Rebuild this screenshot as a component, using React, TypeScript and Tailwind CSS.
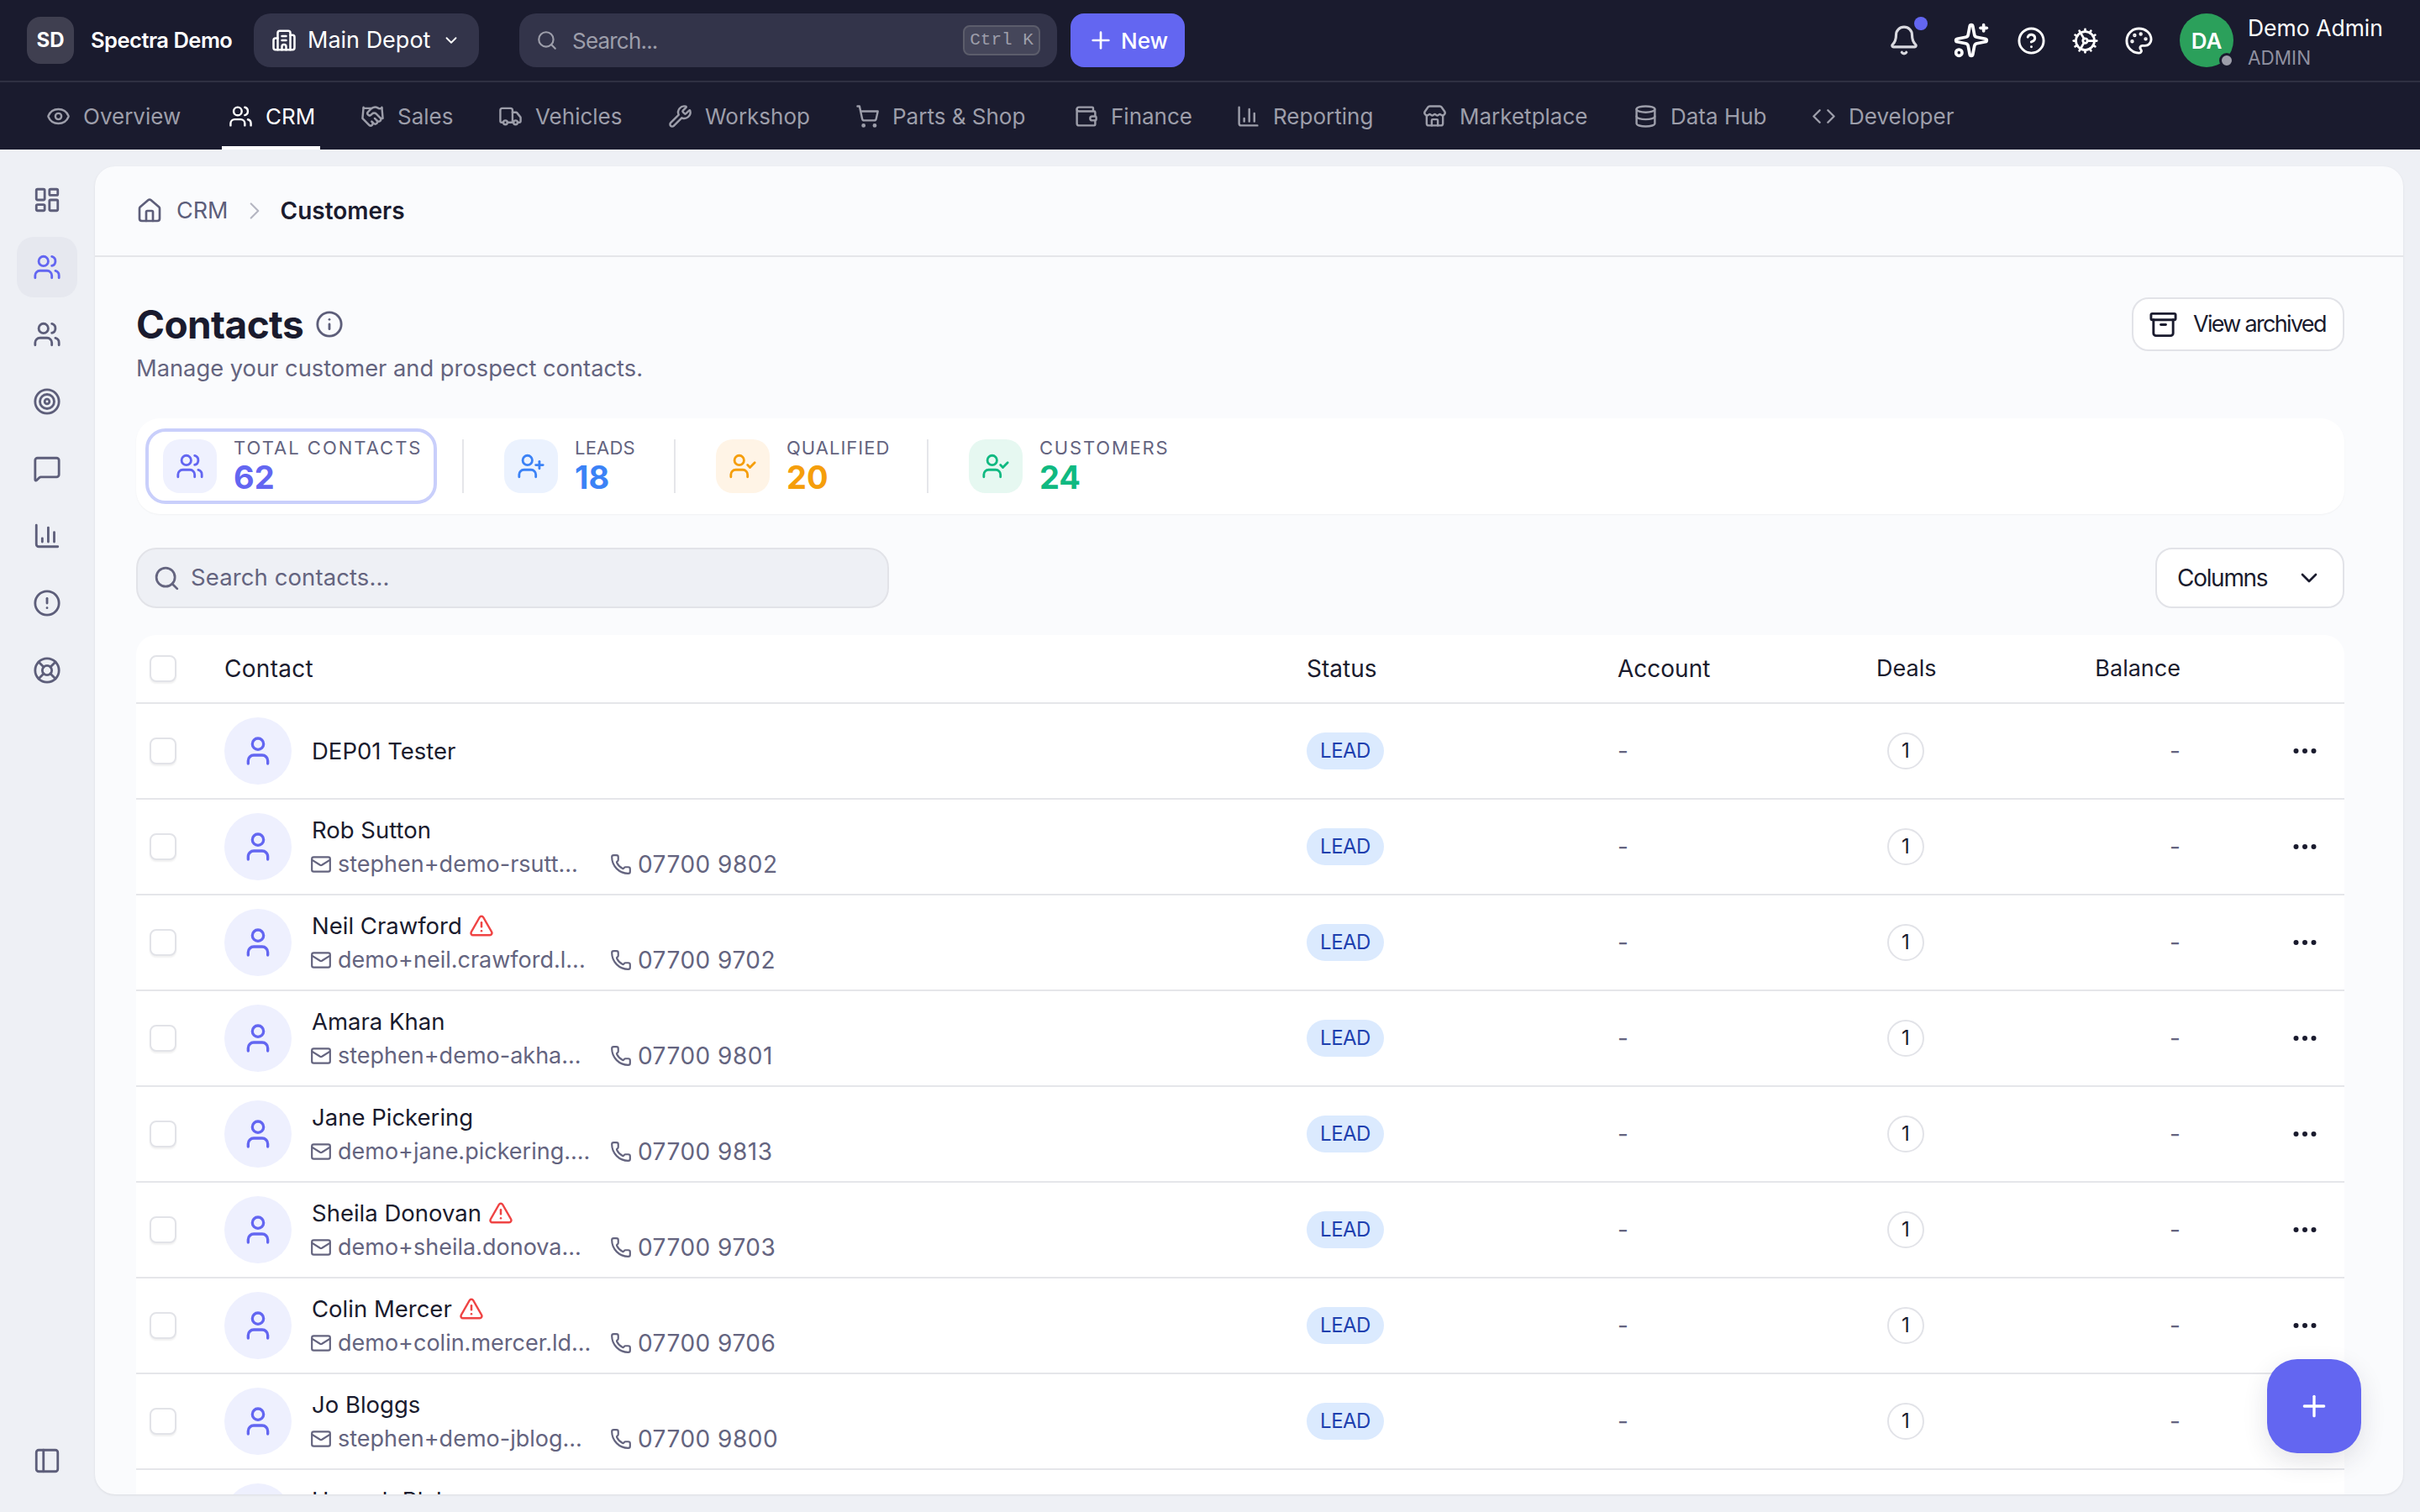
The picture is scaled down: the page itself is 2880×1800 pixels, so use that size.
import {
  Archive, Bell, Building2, ChartColumn, ChevronDown, ChevronRight, CircleAlert, CircleHelp, Code, Cog, Database, Ellipsis,
  Eye, Handshake, House, Info, LayoutDashboard, LifeBuoy, Mail, MessageSquare, Palette, PanelLeft, Phone, Plus,
  Search, ShoppingCart, Sparkles, Store, Target, TriangleAlert, Truck, User, UserCheck, UserPlus, Users,
  Wallet, Wrench,
} from 'lucide-react'

const NAV = [
  { label: 'Overview', icon: Eye, width: 'w-[117px]' },
  { label: 'CRM', icon: Users, active: true, width: 'w-[57px]' },
  { label: 'Sales', icon: Handshake, width: 'w-[64px]' },
  { label: 'Vehicles', icon: Truck, width: 'w-[102px]' },
  { label: 'Workshop', icon: Wrench, width: 'w-[123px]' },
  { label: 'Parts & Shop', icon: ShoppingCart, width: 'w-[160px]' },
  { label: 'Finance', icon: Wallet, width: 'w-[93px]' },
  { label: 'Reporting', icon: ChartColumn, width: 'w-[122px]' },
  { label: 'Marketplace', icon: Store, width: 'w-[151px]' },
  { label: 'Data Hub', icon: Database, width: 'w-[112px]' },
  { label: 'Developer', icon: Code, width: 'w-[115px]' },
]

const SIDE = [LayoutDashboard, Users, Users, Target, MessageSquare, ChartColumn, CircleAlert, LifeBuoy]

const STATS = [
  { label: 'TOTAL CONTACTS', value: '62', icon: Users, box: 'bg-[#eff1fe]', tone: 'text-[#6366f1]', width: 'w-[222px]', track: 'tracking-[2px]' },
  { label: 'LEADS', value: '18', icon: UserPlus, box: 'bg-[#ebf2fe]', tone: 'text-[#3b82f6]', width: 'w-[70px]', track: 'tracking-[0.2px]' },
  { label: 'QUALIFIED', value: '20', icon: UserCheck, box: 'bg-[#fff4e6]', tone: 'text-[#f59e0b]', width: 'w-[119px]', track: 'tracking-[1px]' },
  { label: 'CUSTOMERS', value: '24', icon: UserCheck, box: 'bg-[#e6f8f1]', tone: 'text-[#10b981]', width: 'w-[150px]', track: 'tracking-[1.8px]' },
]

const ROWS = [
  { name: 'DEP01 Tester' },
  { name: 'Rob Sutton', email: 'stephen+demo-rsutt...', phone: '07700 9802' },
  { name: 'Neil Crawford', email: 'demo+neil.crawford.l...', phone: '07700 9702', warn: true },
  { name: 'Amara Khan', email: 'stephen+demo-akha...', phone: '07700 9801' },
  { name: 'Jane Pickering', email: 'demo+jane.pickering....', phone: '07700 9813' },
  { name: 'Sheila Donovan', email: 'demo+sheila.donova...', phone: '07700 9703', warn: true },
  { name: 'Colin Mercer', email: 'demo+colin.mercer.ld...', phone: '07700 9706', warn: true },
  { name: 'Jo Bloggs', email: 'stephen+demo-jblog...', phone: '07700 9800' },
  { name: 'Hannah Blake', email: 'stephen+demo-hblak...', phone: '07700 9804' },
]

const GRID = 'grid grid-cols-[105px_1288px_370px_308px_70px_292px_1fr] items-center'

function Checkbox() {
  return <div className="ml-4 h-8 w-8 rounded-[8px] border-2 border-[#e2e3e8] bg-white shadow-[0_2px_2px_rgba(0,0,0,0.06)]" />
}

function Row({ name, email, phone, warn }: { name: string; email?: string; phone?: string; warn?: boolean }) {
  return (
    <div className={`${GRID} h-[114px] shrink-0 border-b-2 border-[#e5e6ea]`}>
      <Checkbox />
      <div className="flex items-center gap-6">
        <div className="flex h-20 w-20 items-center justify-center rounded-full bg-[#eef0fe] text-[#6366f1]">
          <User size={40} strokeWidth={2} />
        </div>
        <div className="flex flex-col gap-[6px]">
          <div className="flex items-center gap-2 text-[27.5px] leading-[36px] text-[#1a1b2e]">
            {name}
            {warn && <TriangleAlert size={30} className="text-[#ef4444]" />}
          </div>
          {email && (
            <div className="-ml-[2px] flex items-center text-[#64647f]">
              <Mail size={26} className="mr-[7px] shrink-0" />
              <span className="w-[324px] whitespace-nowrap text-[27px] leading-[34px]">{email}</span>
              <Phone size={26} className="mr-[7px] shrink-0" />
              <span className="text-[28px] leading-[34px] tracking-[0.5px]">{phone}</span>
            </div>
          )}
        </div>
      </div>
      <div>
        <span className="inline-flex h-11 w-[92px] items-center justify-center rounded-full bg-[#dbeafe] text-[24px] tracking-[-0.5px] text-[#1e40af]">LEAD</span>
      </div>
      <div className="text-[28px] text-[#64647f]">-</div>
      <div className="flex justify-center">
        <span className="flex h-11 w-11 items-center justify-center rounded-full border-2 border-[#e2e3e8] text-[24px] text-[#1a1b2e]">1</span>
      </div>
      <div className="text-right text-[28px] text-[#64647f]">-</div>
      <div className="flex justify-end pr-[29px] text-[#1a1b2e]">
        <Ellipsis size={36} strokeWidth={2} />
      </div>
    </div>
  )
}

export default function App() {
  return (
    <div className="flex h-[1800px] w-[2880px] flex-col overflow-hidden bg-[#eef0f5] font-['Inter',sans-serif]">
      {/* Top bar */}
      <header className="flex h-[98px] shrink-0 items-center border-b-2 border-[#2f3042] bg-[#1a1b2e] pl-8 pr-[44px]">
        <div className="flex h-14 w-14 shrink-0 items-center justify-center rounded-[16px] bg-[#3f3f50] text-[24px] font-bold text-white">SD</div>
        <span className="ml-5 w-[194px] whitespace-nowrap text-[25.5px] font-semibold tracking-[-0.5px] text-white">Spectra Demo</span>
        <button className="flex h-16 w-[268px] items-center rounded-[20px] bg-[#33344a] pl-[21px] text-[27px] text-white">
          <Building2 size={30} />
          <span className="ml-[13px]">Main Depot</span>
          <ChevronDown size={22} className="ml-[14px]" />
        </button>
        <div className="ml-12 flex h-16 w-[640px] items-center rounded-[20px] bg-[#33344a] pl-5 pr-5 text-[#9d9eaa]">
          <Search size={26} />
          <span className="ml-[17px] flex-1 text-[26px] tracking-[-0.8px]">Search...</span>
          <span className="flex h-9 w-[92px] items-center justify-center rounded-[8px] border-2 border-[#5c5d6b] bg-[#45465a] font-['Liberation_Mono',monospace] text-[21px]">Ctrl K</span>
        </div>
        <button className="ml-4 flex h-16 w-[136px] items-center justify-center gap-2 rounded-[16px] bg-[#6366f1] text-[26px] font-medium text-white">
          <Plus size={32} />
          New
        </button>
        <div className="ml-auto flex items-center text-white">
          <div className="relative mr-[39px] text-[#d9d9df]">
            <Bell size={38} />
            <span className="absolute -right-[9px] -top-[9px] h-4 w-4 rounded-full bg-[#6366f1]" />
          </div>
          <Sparkles size={44} className="mr-[32px]" />
          <CircleHelp size={35} className="mr-[30px]" />
          <Cog size={33} className="mr-[30px]" />
          <Palette size={35} className="mr-[31px]" />
          <div className="relative mr-[17px] flex h-16 w-16 items-center justify-center rounded-full bg-[#2ba05b] text-[26px] font-semibold text-white">
            DA
            <span className="absolute -bottom-[1px] -right-[1px] h-[18px] w-[18px] rounded-full border-[3px] border-[#1a1b2e] bg-[#9d9eaa]" />
          </div>
          <div className="flex w-[161px] flex-col whitespace-nowrap pt-[5px]">
            <span className="text-[26.5px] leading-[36px] text-white">Demo Admin</span>
            <span className="text-[22.5px] leading-[36px] text-[#8f90a0]">ADMIN</span>
          </div>
        </div>
      </header>

      {/* Module nav */}
      <nav className="flex h-20 shrink-0 items-stretch gap-[40px] bg-[#1a1b2e] pl-[47px]">
        {NAV.map(({ label, icon: Icon, active, width }) => (
          <div key={label} className={`relative flex items-center gap-[15px] whitespace-nowrap px-2 text-[26px] ${active ? 'text-white' : 'text-[#9d9eaa]'}`}>
            <Icon size={29} />
            <span className={width}>{label}</span>
            {active && <span className="absolute inset-x-0 bottom-0 h-1 bg-white" />}
          </div>
        ))}
      </nav>

      <div className="flex min-h-0 flex-1 pb-[21px] pr-5 pt-5">
        {/* Sidebar */}
        <aside className="flex w-[113px] shrink-0 flex-col items-center pr-[1px] pt-[4px] text-[#5d5e7a]">
          {SIDE.map((Icon, i) => (
            <div key={i} className={`mb-2 flex h-[72px] w-[72px] items-center justify-center rounded-[20px] ${i === 1 ? 'bg-[#e6e8ef] text-[#6366f1]' : ''}`}>
              <Icon size={34} />
            </div>
          ))}
          <div className="mb-[20px] mt-auto flex h-[40px] items-center"><PanelLeft size={34} /></div>
        </aside>

        {/* Main card */}
        <main className="relative flex min-w-0 flex-1 flex-col overflow-hidden rounded-[24px] bg-[#fafbfd] shadow-[0_1px_3px_rgba(0,0,0,0.08)]">
          <div className="flex h-[108px] shrink-0 items-center border-b-2 border-[#e5e6ea] pl-[49px]">
            <House size={32} className="text-[#5d5e7a]" />
            <span className="ml-[16px] text-[27px] text-[#5d5e7a]">CRM</span>
            <ChevronRight size={34} className="ml-[14px] text-[#b5b6c2]" strokeWidth={1.5} />
            <span className="ml-[14px] text-[28px] font-semibold text-[#1a1b2e]">Customers</span>
          </div>

          <div className="flex min-h-0 flex-1 flex-col pl-[49px] pr-[70px]">
            <div className="mt-[48px] flex shrink-0 items-start justify-between">
              <div>
                <div className="flex items-center gap-[14px]">
                  <h1 className="text-[46px] font-bold leading-[64px] tracking-[-0.6px] text-[#1a1b2e]">Contacts</h1>
                  <Info size={34} className="text-[#5d5e7a]" />
                </div>
                <p className="mt-[2px] text-[27.3px] leading-[38px] text-[#64647f]">Manage your customer and prospect contacts.</p>
              </div>
              <button className="flex h-16 w-[253px] items-center gap-[18px] rounded-[20px] border-2 border-[#e2e3e8] bg-white pl-[18px] text-[27px] tracking-[-1.7px] text-[#1a1b2e]">
                <Archive size={35} className="shrink-0" />
                <span className="whitespace-nowrap">View archived</span>
              </button>
            </div>

            <div className="mt-[40px] flex h-[114px] shrink-0 items-center rounded-[28px] bg-white pl-[11px] shadow-[0_1px_2px_rgba(0,0,0,0.04)]">
              {STATS.map(({ label, value, icon: Icon, box, tone, width, track }, i) => (
                <div key={label} className="flex items-center">
                  <div className={`flex h-[90px] items-center gap-5 ${i === 0 ? 'rounded-[24px] border-4 border-[#c9cffb] pl-[17px] pr-4' : ''}`}>
                    <div className={`flex h-16 w-16 shrink-0 items-center justify-center rounded-[20px] ${box} ${tone}`}>
                      <Icon size={34} />
                    </div>
                    <div className={`flex flex-col whitespace-nowrap pb-[2px] ${width}`}>
                      <span className={`text-[22px] leading-[28px] text-[#64647f] ${track}`}>{label}</span>
                      <span className={`text-[38px] font-bold leading-[42px] ${tone}`}>{value}</span>
                    </div>
                  </div>
                  {i < 3 && <div className={`mr-[48px] h-16 w-[2px] bg-[#e5e6ea] ${i === 0 ? 'ml-[30px]' : 'ml-[48px]'}`} />}
                </div>
              ))}
            </div>

            <div className="mt-[40px] flex shrink-0 items-center justify-between">
              <div className="flex h-[72px] w-[896px] items-center gap-3 rounded-[24px] border-2 border-[#e2e3e8] bg-[#eef0f5] pl-[18px] text-[27.5px] tracking-[0.1px] text-[#64647f]">
                <Search size={33} />
                Search contacts...
              </div>
              <button className="flex h-[72px] w-[225px] items-center justify-between rounded-[20px] border-2 border-[#e2e3e8] bg-white pl-6 pr-6 text-[28px] tracking-[-1.3px] text-[#1a1b2e]">
                Columns
                <ChevronDown size={32} />
              </button>
            </div>

            <div className="mt-[32px] flex min-h-0 flex-1 flex-col overflow-hidden rounded-t-[24px] bg-white">
              <div className={`${GRID} h-[82px] shrink-0 border-b-2 border-[#e5e6ea] text-[28px] text-[#1a1b2e]`}>
                <Checkbox />
                <span className="tracking-[0.3px]">Contact</span>
                <span>Status</span>
                <span>Account</span>
                <span className="whitespace-nowrap text-center text-[27px]">Deals</span>
                <span className="text-right text-[27px]">Balance</span>
                <span />
              </div>
              {ROWS.map(r => <Row key={r.name} {...r} />)}
            </div>
          </div>

          {/* Floating add button */}
          <button className="absolute bottom-[49px] right-[50px] flex h-[112px] w-[112px] items-center justify-center rounded-[36px] bg-[#6366f1] text-white shadow-[0_10px_30px_rgba(30,30,60,0.12)]">
            <Plus size={40} />
          </button>
        </main>
      </div>
    </div>
  )
}
